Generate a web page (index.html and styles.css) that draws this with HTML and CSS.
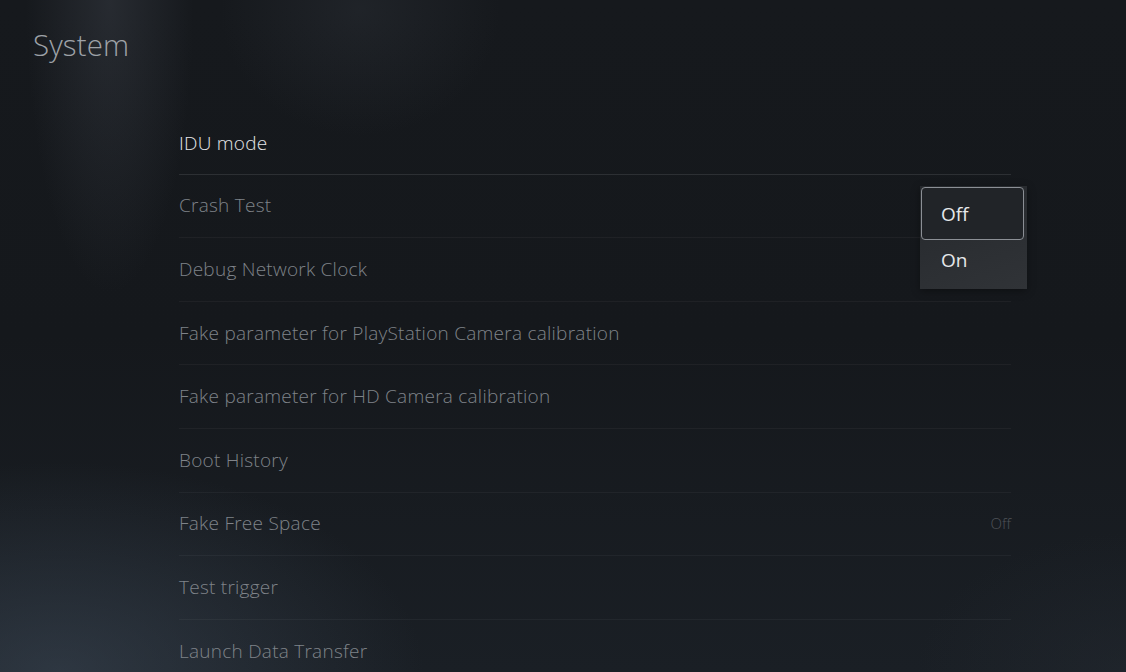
FILE: index.html
```html
<!DOCTYPE html>
<html lang="en">
<head>
    <meta charset="UTF-8">
    <meta name="viewport" content="width=device-width, initial-scale=1.0">
    <title>System</title>
    <link rel="stylesheet" href="styles.css">
</head>
<body>
    <div class="screen">
        <h1 class="title">System</h1>

        <ul class="settings">
            <li class="row active"><span>IDU mode</span></li>
            <li class="row"><span>Crash Test</span></li>
            <li class="row"><span>Debug Network Clock</span></li>
            <li class="row"><span>Fake parameter for PlayStation Camera calibration</span></li>
            <li class="row"><span>Fake parameter for HD Camera calibration</span></li>
            <li class="row"><span>Boot History</span></li>
            <li class="row"><span>Fake Free Space</span><span class="value">Off</span></li>
            <li class="row"><span>Test trigger</span></li>
            <li class="row"><span>Launch Data Transfer</span></li>
        </ul>

        <div class="dropdown">
            <div class="option selected">Off</div>
            <div class="option">On</div>
        </div>
    </div>
</body>
</html>
```

FILE: styles.css
```css
* {
    margin: 0;
    padding: 0;
    box-sizing: border-box;
}

html, body {
    width: 1126px;
    height: 672px;
    overflow: hidden;
}

body {
    font-family: 'Open Sans', 'Noto Sans', sans-serif;
    background: #15181c;
}

.screen {
    position: relative;
    width: 1126px;
    height: 672px;
    overflow: hidden;
    background:
        radial-gradient(ellipse 120px 420px at 110px 0px, rgba(90, 96, 108, .25), transparent 70%),
        radial-gradient(ellipse 200px 180px at 360px 10px, rgba(70, 76, 86, .2), transparent 70%),
        radial-gradient(ellipse 520px 300px at 60px 672px, rgba(70, 84, 100, .45), transparent 70%),
        radial-gradient(ellipse 300px 200px at 1126px 672px, rgba(40, 46, 54, .35), transparent 70%),
        linear-gradient(180deg, #16191d 0%, #15181c 50%, #1a1f25 100%);
    padding: 24px 0 0 0;
}

.title {
    margin-left: 33px;
    font-size: 29.5px;
    font-weight: 300;
    color: #9ea2a8;
    line-height: 42px;
    letter-spacing: 0.1px;
}

.settings {
    list-style: none;
    margin: 45px 115px 0 179px;
}

.row {
    height: 63.6px;
    display: flex;
    align-items: center;
    justify-content: space-between;
    border-bottom: 1px solid rgba(255, 255, 255, .045);
    font-size: 19px;
    font-weight: 300;
    letter-spacing: 0.25px;
    color: #7f8389;
    padding-bottom: 1px;
}

.row.active {
    color: #e4e5e7;
    border-bottom: 1px solid rgba(255, 255, 255, .1);
    padding-bottom: 0;
    padding-top: 1px;
}

.row .value {
    font-size: 15px;
    letter-spacing: 0;
    color: #4f5358;
}

.dropdown {
    position: absolute;
    left: 920px;
    top: 186px;
    width: 107px;
    height: 103px;
    background: linear-gradient(160deg, #25282c 0%, #2c2f33 60%, #303337 100%);
    box-shadow: 0 2px 8px rgba(0, 0, 0, .35);
    padding: 1px 3px 0 1px;
}

.option {
    height: 40px;
    display: flex;
    align-items: center;
    padding-left: 20px;
    font-size: 19px;
    color: #e6e8ea;
}

.option.selected {
    height: 53px;
    border: 1.5px solid #8b8f95;
    border-radius: 4px;
    background: #212428;
    padding-left: 19px;
}
```
